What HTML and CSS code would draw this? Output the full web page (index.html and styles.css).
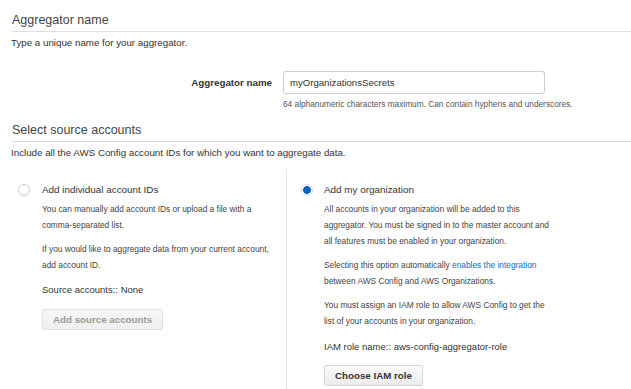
FILE: index.html
```html
<!DOCTYPE html>
<html lang="en">
<head>
    <meta charset="UTF-8">
    <title>Create aggregator</title>
    <link rel="stylesheet" href="styles.css">
</head>
<body>

<!-- Aggregator name -->
<section class="block">
    <h2 class="block-title">Aggregator name</h2>
    <p class="block-desc">Type a unique name for your aggregator.</p>

    <div class="field">
        <label class="field-label" for="agg-name">Aggregator name</label>
        <div class="field-control">
            <input id="agg-name" class="text-input" type="text" value="myOrganizationsSecrets">
            <div class="field-hint">64 alphanumeric characters maximum. Can contain hyphens and underscores.</div>
        </div>
    </div>
</section>

<!-- Source accounts -->
<section class="block">
    <h2 class="block-title">Select source accounts</h2>
    <p class="block-desc">Include all the AWS Config account IDs for which you want to aggregate data.</p>

    <div class="choices">
        <div class="choice choice-left">
            <span class="radio"></span>
            <div class="choice-body">
                <div class="choice-title">Add individual account IDs</div>
                <p class="choice-text">You can manually add account IDs or upload a file with a comma-separated list.</p>
                <p class="choice-text">If you would like to aggregate data from your current account, add account ID.</p>
                <div class="choice-value">Source accounts:: None</div>
                <button class="btn" disabled>Add source accounts</button>
            </div>
        </div>

        <div class="choice choice-right">
            <span class="radio radio-on"></span>
            <div class="choice-body">
                <div class="choice-title">Add my organization</div>
                <p class="choice-text">All accounts in your organization will be added to this aggregator. You must be signed in to the master account and all features must be enabled in your organization.</p>
                <p class="choice-text">Selecting this option automatically <a href="#">enables the integration</a> between AWS Config and AWS Organizations.</p>
                <p class="choice-text">You must assign an IAM role to allow AWS Config to get the list of your accounts in your organization.</p>
                <div class="choice-value">IAM role name:: aws-config-aggregator-role</div>
                <button class="btn">Choose IAM role</button>
                <div class="check-row"><span class="checkbox"></span></div>
            </div>
        </div>
    </div>
</section>

</body>
</html>
```

FILE: styles.css
```css
body, html {
    margin: 0;
    padding: 0;
    font-family: "Liberation Sans", Arial, sans-serif;
    color: #333;
    background: #fff;
    overflow: hidden;
}

body {
    padding-left: 11px;
}

/* Section headers */
.block-title {
    margin: 12px 0 0 1px;
    padding-bottom: 3px;
    font-size: 12.5px;
    line-height: 16px;
    font-weight: normal;
    color: #444;
    border-bottom: 1px solid #ddd;
}

.block-desc {
    margin: 4px 0 0;
    font-size: 9.75px;
    line-height: 14px;
    color: #333;
}

/* Name field */
.field {
    display: flex;
    gap: 11px;
    margin-top: 21px;
}

.field-label {
    width: 261px;
    text-align: right;
    font-size: 9.75px;
    font-weight: bold;
    line-height: 23px;
    color: #333;
}

.text-input {
    box-sizing: border-box;
    width: 262px;
    height: 23px;
    margin: 0;
    padding: 0 6px;
    border: 1px solid #ccc;
    border-radius: 3px;
    font-family: inherit;
    font-size: 9.6px;
    color: #333;
}

.field-hint {
    margin-top: 4px;
    font-size: 8.3px;
    line-height: 12px;
    color: #555;
}

/* Two option columns */
.choices {
    display: grid;
    grid-template-columns: 275px 1fr;
    margin-top: 9px;
}

.choice {
    display: flex;
    align-items: flex-start;
    padding-top: 14px;
    min-height: 240px;
}

.choice-left {
    padding-left: 7px;
    gap: 12px;
}

.choice-right {
    border-left: 1px solid #e3e3e3;
    padding-left: 14px;
    gap: 11px;
}

.radio {
    flex: none;
    box-sizing: border-box;
    width: 12px;
    height: 12px;
    margin-top: 1px;
    border: 1px solid #c9c9c9;
    border-radius: 50%;
    background: #fff;
}

.radio-on {
    border-color: #ddd;
    background: radial-gradient(circle, #0b63c4 0 3.6px, #fff 4.2px);
}

.choice-title {
    font-size: 9.9px;
    line-height: 14px;
    color: #333;
}

.choice-text {
    margin: 4px 0 8px;
    font-size: 8.35px;
    line-height: 16px;
    color: #444;
}

.choice-left .choice-text { width: 240px; }
.choice-right .choice-text { width: 226px; }

.choice-text + .choice-text { margin-top: 0; }

.choice-text a {
    color: #0a6ebd;
    text-decoration: none;
}

.choice-value {
    margin-top: 10px;
    font-size: 9.5px;
    line-height: 14px;
    color: #333;
}

.choice-right .choice-value { margin-top: 11px; }

.btn {
    display: block;
    margin-top: 12px;
    height: 21px;
    padding: 0 10px;
    border: 1px solid #d6d6d6;
    border-radius: 2px;
    background: linear-gradient(#fafafa, #ececec);
    font-family: inherit;
    font-size: 9.75px;
    font-weight: bold;
    color: #333;
}

.choice-right .btn { margin-top: 11px; }

.btn:disabled {
    color: #9a9a9a;
    background: linear-gradient(#f7f7f7, #efefef);
    border-color: #e0e0e0;
}

.check-row {
    margin-top: 1px;
    padding-left: 14px;
}

.checkbox {
    display: inline-block;
    width: 8px;
    height: 8px;
    border: 1px solid #aaa;
    border-radius: 2px;
    background: #fff;
}
```
